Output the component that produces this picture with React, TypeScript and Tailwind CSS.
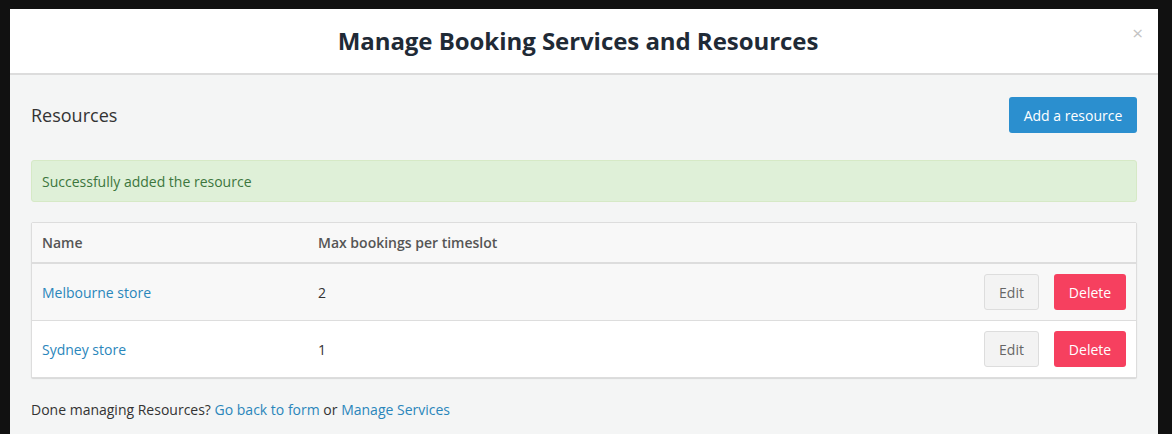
import React from "react";

export default function App() {
  const rows = [
    { name: "Melbourne store", max: "2", striped: true },
    { name: "Sydney store", max: "1", striped: false },
  ];
  return (
    <div className="w-[1172px] h-[434px] overflow-hidden bg-[#111111] pt-[9px] px-[10px] font-['Open_Sans',sans-serif] text-[#333]">
      <div className="w-[1148px] h-[440px] bg-[#f4f5f5] flex flex-col">
        <div className="relative h-[66px] bg-white border-b-2 border-[#dcdcdc] flex items-center justify-center pr-[12px]">
          <h1 className="text-[24px] font-bold text-[#1f2a36] leading-none tracking-[-0.05px]">
            Manage Booking Services and Resources
          </h1>
          <span className="absolute right-[15px] top-[15px] text-[#c4c4c4] text-[19px] leading-none">×</span>
        </div>
        <div className="px-[21px] pt-[22px]">
          <div className="flex items-center justify-between h-[36px]">
            <h2 className="text-[18px] text-[#333] font-normal">Resources</h2>
            <button className="h-[36px] w-[128px] rounded-[3px] bg-[#2b8fcf] text-white text-[14px]">Add a resource</button>
          </div>
          <div className="mt-[27px] h-[42px] bg-[#dff0d8] border border-[#d6e9c6] rounded-[3px] flex items-center pl-[10px] text-[14px] text-[#3c763d]">
            Successfully added the resource
          </div>
          <div className="mt-[20px] border border-[#dddddd] rounded-[2px] bg-white shadow-[0_1px_1px_rgba(0,0,0,0.12)] text-[14px]">
            <div className="flex items-center h-[41px] bg-[#f8f8f8] border-b-2 border-[#dddddd] font-semibold text-[#555]">
              <div className="w-[286px] pl-[10px]">Name</div>
              <div>Max bookings per timeslot</div>
            </div>
            {rows.map((r, i) => (
              <div
                key={r.name}
                className={`flex items-center ${i === 0 ? "h-[57px] border-b border-[#dddddd]" : "h-[56px]"} ${r.striped ? "bg-[#f8f8f8]" : "bg-white"}`}
              >
                <div className="w-[286px] pl-[10px] text-[#2a86bb]">{r.name}</div>
                <div className="flex-1">{r.max}</div>
                <div className="flex gap-[15px] pr-[10px]">
                  <button className="h-[36px] w-[55px] rounded-[3px] bg-[#f3f3f3] border border-[#dddddd] text-[#666] text-[14px]">Edit</button>
                  <button className="h-[36px] w-[72px] rounded-[3px] bg-[#f6405f] text-white text-[14px]">Delete</button>
                </div>
              </div>
            ))}
          </div>
          <p className="mt-[21px] text-[14px] text-[#333]">
            Done managing Resources? <span className="text-[#2a86bb]">Go back to form</span> or{" "}
            <span className="text-[#2a86bb]">Manage Services</span>
          </p>
        </div>
      </div>
    </div>
  );
}
